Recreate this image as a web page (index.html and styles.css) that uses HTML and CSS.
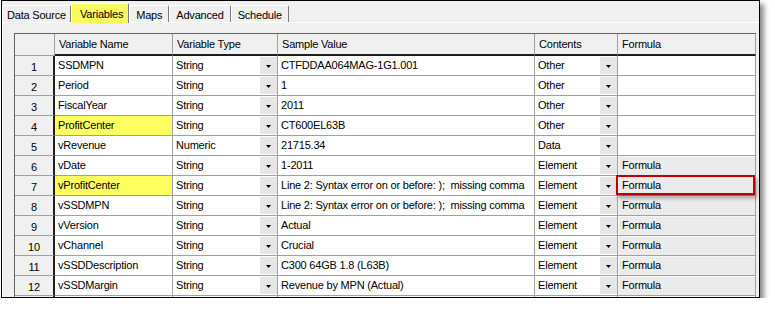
FILE: index.html
```html
<!DOCTYPE html>
<html>
<head>
<meta charset="utf-8">
<link rel="stylesheet" href="styles.css">
</head>
<body>
<div class="window">
  <div class="tabs">
    <div class="tab first">Data Source</div>
    <div class="tab active">Variables</div>
    <div class="tab">Maps</div>
    <div class="tab">Advanced</div>
    <div class="tab">Schedule</div>
  </div>
  <div class="panel">
    <div class="grid">
      <div class="c corner"></div>
      <div class="c h">Variable Name</div>
      <div class="c h">Variable Type</div>
      <div class="c h">Sample Value</div>
      <div class="c h">Contents</div>
      <div class="c h">Formula</div>

      <div class="c rn">1</div><div class="c">SSDMPN</div><div class="c dd"><span class="v">String</span><span class="btn"><svg width="5" height="3" viewBox="0 0 5 3"><path d="M0 0H5L2.5 3Z"/></svg></span></div><div class="c">CTFDDAA064MAG-1G1.001</div><div class="c dd"><span class="v">Other</span><span class="btn"><svg width="5" height="3" viewBox="0 0 5 3"><path d="M0 0H5L2.5 3Z"/></svg></span></div><div class="c"></div>

      <div class="c rn">2</div><div class="c">Period</div><div class="c dd"><span class="v">String</span><span class="btn"><svg width="5" height="3" viewBox="0 0 5 3"><path d="M0 0H5L2.5 3Z"/></svg></span></div><div class="c">1</div><div class="c dd"><span class="v">Other</span><span class="btn"><svg width="5" height="3" viewBox="0 0 5 3"><path d="M0 0H5L2.5 3Z"/></svg></span></div><div class="c"></div>

      <div class="c rn">3</div><div class="c">FiscalYear</div><div class="c dd"><span class="v">String</span><span class="btn"><svg width="5" height="3" viewBox="0 0 5 3"><path d="M0 0H5L2.5 3Z"/></svg></span></div><div class="c">2011</div><div class="c dd"><span class="v">Other</span><span class="btn"><svg width="5" height="3" viewBox="0 0 5 3"><path d="M0 0H5L2.5 3Z"/></svg></span></div><div class="c"></div>

      <div class="c rn">4</div><div class="c hl">ProfitCenter</div><div class="c dd"><span class="v">String</span><span class="btn"><svg width="5" height="3" viewBox="0 0 5 3"><path d="M0 0H5L2.5 3Z"/></svg></span></div><div class="c">CT600EL63B</div><div class="c dd"><span class="v">Other</span><span class="btn"><svg width="5" height="3" viewBox="0 0 5 3"><path d="M0 0H5L2.5 3Z"/></svg></span></div><div class="c"></div>

      <div class="c rn">5</div><div class="c">vRevenue</div><div class="c dd"><span class="v">Numeric</span><span class="btn"><svg width="5" height="3" viewBox="0 0 5 3"><path d="M0 0H5L2.5 3Z"/></svg></span></div><div class="c">21715.34</div><div class="c dd"><span class="v">Data</span><span class="btn"><svg width="5" height="3" viewBox="0 0 5 3"><path d="M0 0H5L2.5 3Z"/></svg></span></div><div class="c"></div>

      <div class="c rn">6</div><div class="c">vDate</div><div class="c dd"><span class="v">String</span><span class="btn"><svg width="5" height="3" viewBox="0 0 5 3"><path d="M0 0H5L2.5 3Z"/></svg></span></div><div class="c">1-2011</div><div class="c dd"><span class="v">Element</span><span class="btn"><svg width="5" height="3" viewBox="0 0 5 3"><path d="M0 0H5L2.5 3Z"/></svg></span></div><div class="c fx">Formula</div>

      <div class="c rn">7</div><div class="c hl">vProfitCenter</div><div class="c dd"><span class="v">String</span><span class="btn"><svg width="5" height="3" viewBox="0 0 5 3"><path d="M0 0H5L2.5 3Z"/></svg></span></div><div class="c">Line 2: Syntax error on or before: );  missing comma</div><div class="c dd"><span class="v">Element</span><span class="btn"><svg width="5" height="3" viewBox="0 0 5 3"><path d="M0 0H5L2.5 3Z"/></svg></span></div><div class="c fx flag">Formula</div>

      <div class="c rn">8</div><div class="c">vSSDMPN</div><div class="c dd"><span class="v">String</span><span class="btn"><svg width="5" height="3" viewBox="0 0 5 3"><path d="M0 0H5L2.5 3Z"/></svg></span></div><div class="c">Line 2: Syntax error on or before: );  missing comma</div><div class="c dd"><span class="v">Element</span><span class="btn"><svg width="5" height="3" viewBox="0 0 5 3"><path d="M0 0H5L2.5 3Z"/></svg></span></div><div class="c fx">Formula</div>

      <div class="c rn">9</div><div class="c">vVersion</div><div class="c dd"><span class="v">String</span><span class="btn"><svg width="5" height="3" viewBox="0 0 5 3"><path d="M0 0H5L2.5 3Z"/></svg></span></div><div class="c">Actual</div><div class="c dd"><span class="v">Element</span><span class="btn"><svg width="5" height="3" viewBox="0 0 5 3"><path d="M0 0H5L2.5 3Z"/></svg></span></div><div class="c fx">Formula</div>

      <div class="c rn">10</div><div class="c">vChannel</div><div class="c dd"><span class="v">String</span><span class="btn"><svg width="5" height="3" viewBox="0 0 5 3"><path d="M0 0H5L2.5 3Z"/></svg></span></div><div class="c">Crucial</div><div class="c dd"><span class="v">Element</span><span class="btn"><svg width="5" height="3" viewBox="0 0 5 3"><path d="M0 0H5L2.5 3Z"/></svg></span></div><div class="c fx">Formula</div>

      <div class="c rn">11</div><div class="c">vSSDDescription</div><div class="c dd"><span class="v">String</span><span class="btn"><svg width="5" height="3" viewBox="0 0 5 3"><path d="M0 0H5L2.5 3Z"/></svg></span></div><div class="c">C300 64GB 1.8 (L63B)</div><div class="c dd"><span class="v">Element</span><span class="btn"><svg width="5" height="3" viewBox="0 0 5 3"><path d="M0 0H5L2.5 3Z"/></svg></span></div><div class="c fx">Formula</div>

      <div class="c rn">12</div><div class="c">vSSDMargin</div><div class="c dd"><span class="v">String</span><span class="btn"><svg width="5" height="3" viewBox="0 0 5 3"><path d="M0 0H5L2.5 3Z"/></svg></span></div><div class="c">Revenue by MPN (Actual)</div><div class="c dd"><span class="v">Element</span><span class="btn"><svg width="5" height="3" viewBox="0 0 5 3"><path d="M0 0H5L2.5 3Z"/></svg></span></div><div class="c fx">Formula</div>

      <div class="c rn"></div><div class="c"></div><div class="c"></div><div class="c"></div><div class="c"></div><div class="c"></div>
    </div>
  </div>
</div>
</body>
</html>
```
FILE: styles.css
```css
html, body {
  margin: 0;
  padding: 0;
  background: #fff;
}
body {
  padding-left: 1px;
  font-family: "Liberation Sans", Arial, sans-serif;
  font-size: 11px;
  letter-spacing: -0.2px;
  color: #000;
}
.window {
  width: 759px;
  height: 298px;
  box-sizing: border-box;
  border: 1px solid #000;
  background: #f0f0f0;
  overflow: hidden;
  box-shadow: 4px 4px 5px rgba(0, 0, 0, 0.45);
  display: flex;
  flex-direction: column;
}
.tabs {
  display: flex;
  align-items: flex-end;
  height: 21px;
  flex: none;
}
.tab {
  height: 17px;
  box-sizing: border-box;
  padding: 2px 6px 0;
  border-top: 1px solid #fff;
  border-left: 1px solid #fff;
  border-right: 1px solid #7a7a7a;
  border-radius: 2px 2px 0 0;
  display: flex;
  align-items: center;
  white-space: nowrap;
}
.tab.first {
  padding: 2px 4px 0;
}
.tab.active {
  height: 20px;
  margin-bottom: -1px;
  padding: 0 5px 0 8px;
  background: #fbf95f;
  position: relative;
  z-index: 1;
}
.panel {
  flex: 1;
  border-top: 1px solid #fff;
  border-left: 1px solid #fff;
  padding: 10px 0 0 11px;
  overflow: hidden;
}
.grid {
  display: grid;
  grid-template-columns: 40px 118px 105px 257px 83px 138px;
  grid-template-rows: 22px;
  grid-auto-rows: 20px;
  width: max-content;
  border-top: 1px solid #646464;
  border-left: 1px solid #646464;
  background: #fff;
}
.c {
  box-sizing: border-box;
  border-right: 1px solid #a0a0a0;
  border-bottom: 1px solid #a0a0a0;
  display: flex;
  align-items: center;
  padding: 0 2px 1px 3px;
  white-space: pre;
  overflow: hidden;
}
.corner {
  background: #f0f0f0;
}
.h {
  background: #f0f0f0;
  border-bottom: 2px solid #1e1e1e;
  padding: 0 2px 0 4px;
}
.rn {
  background: #f0f0f0;
  border-right: 2px solid #1e1e1e;
  justify-content: center;
  padding: 2px 0 0 0;
}
.hl {
  background: #ffff62;
}
.dd {
  padding-right: 0;
}
.v {
  flex: 1;
}
.btn {
  width: 17px;
  align-self: stretch;
  margin: 1px 0 0;
  background: #e6e6e6;
  display: flex;
  align-items: center;
  justify-content: center;
  padding-top: 1px;
}
.btn svg {
  display: block;
  fill: #000;
}
.fx {
  background: #ebebeb;
  padding-left: 4px;
  box-shadow: inset 1px 1px 0 #f7f7f7;
}
.flag {
  position: relative;
  overflow: visible;
  z-index: 1;
}
.flag::after {
  content: "";
  position: absolute;
  top: -1px;
  left: -2px;
  right: 0;
  bottom: 0;
  border: 2px solid #c00000;
  box-shadow: 2px 3px 4px rgba(0, 0, 0, 0.35);
}
```
